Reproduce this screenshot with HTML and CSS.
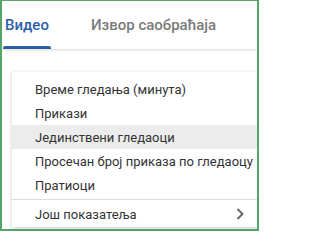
FILE: index.html
```html
<!DOCTYPE html>
<html lang="sr">
<head>
<meta charset="utf-8">
<link rel="stylesheet" href="styles.css">
</head>
<body>
<div class="frame">
  <div class="tabs">
    <div class="tab active"><span class="tab-label">Видео</span><span class="tab-bar"></span></div>
    <div class="tab"><span class="tab-label">Извор саобраћаја</span></div>
  </div>
  <div class="menu">
    <div class="item">Време гледања (минута)</div>
    <div class="item">Прикази</div>
    <div class="item hover">Јединствени гледаоци</div>
    <div class="item">Просечан број приказа по гледаоцу</div>
    <div class="item">Пратиоци</div>
    <div class="sep"></div>
    <div class="item more"><span>Још показатеља</span><svg class="chev" width="8" height="12" viewBox="0 0 8 12"><polyline points="1.5,1 6.5,6 1.5,11" fill="none" stroke="#666" stroke-width="2"/></svg></div>
  </div>
</div>
</body>
</html>
```
FILE: styles.css
```css
html, body {
  margin: 0;
  padding: 0;
  background: #fff;
}
.frame {
  box-sizing: border-box;
  width: 259px;
  height: 231px;
  border: 2px solid #55a566;
  border-top-width: 1px;
  overflow: hidden;
  font-family: Roboto, "Liberation Sans", sans-serif;
  background: #fff;
}
.tabs {
  display: flex;
  height: 48px;
  gap: 38px;
  padding-left: 1px;
  box-shadow: 0 1px 3px rgba(0, 0, 0, 0.16);
  position: relative;
  z-index: 1;
  background: #fff;
}
.tab {
  display: flex;
  flex-direction: column;
  justify-content: space-between;
  padding: 15px 2px 0;
  font-size: 15px;
  line-height: 18px;
  font-weight: 500;
  color: #7a7a7a;
}
.tab.active {
  color: #2c5ea8;
  padding-left: 0;
  padding-right: 0;
  align-items: center;
  width: 48px;
}
.tab-bar {
  display: block;
  width: 48px;
  height: 3px;
  background: #2c5ea8;
  border-radius: 2px 2px 0 0;
}
.menu {
  margin: 23px 0 0 10px;
  width: 250px;
  padding: 5px 0 1px;
  background: #fff;
  box-shadow: 0 1px 4px rgba(0, 0, 0, 0.22);
}
.item {
  height: 24px;
  display: flex;
  align-items: center;
  padding-left: 23px;
  font-size: 13px;
  color: #333;
  white-space: nowrap;
}
.item.hover {
  background: #ececec;
}
.sep {
  height: 1px;
  background: #dcdcdc;
  margin: 2px 0;
}
.item.more {
  justify-content: space-between;
  padding-right: 18px;
}
.chev {
  display: block;
}
```
